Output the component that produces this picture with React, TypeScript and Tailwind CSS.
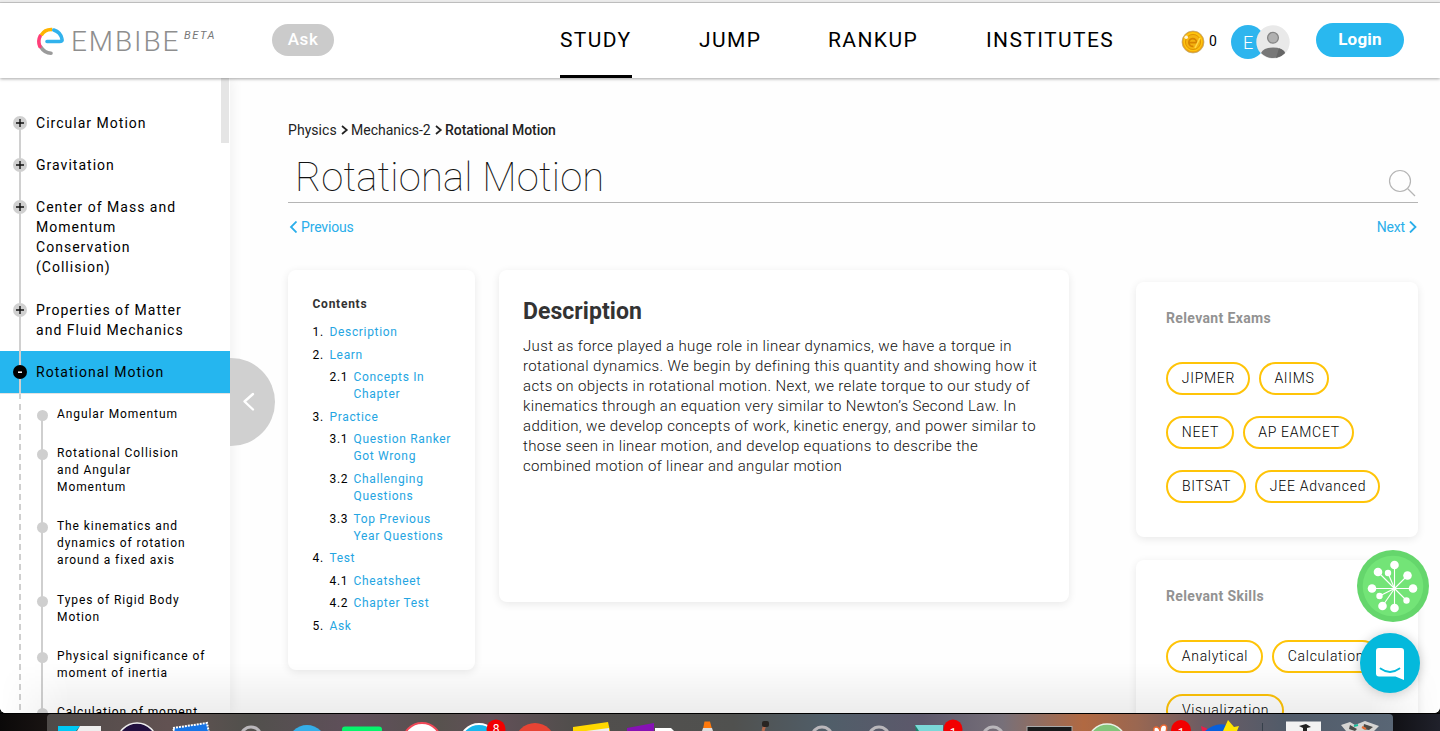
import React from "react";

type Topic = { title: string; height: string };

const topics: Topic[] = [
  { title: "Circular Motion", height: "h-[42px]" },
  { title: "Gravitation", height: "h-[42px]" },
  { title: "Center of Mass and Momentum Conservation (Collision)", height: "h-[103px]" },
  { title: "Properties of Matter and Fluid Mechanics", height: "h-[62px]" },
];

const subTopics = [
  { title: "Angular Momentum", height: "h-[39px]", width: "w-[150px]" },
  { title: "Rotational Collision and Angular Momentum", height: "h-[73px]", width: "w-[135px]" },
  { title: "The kinematics and dynamics of rotation around a fixed axis", height: "h-[74px]", width: "w-[140px]" },
  { title: "Types of Rigid Body Motion", height: "h-[56px]", width: "w-[140px]" },
  { title: "Physical significance of moment of inertia", height: "h-[56px]", width: "w-[160px]" },
  { title: "Calculation of moment of inertia", height: "h-[56px]", width: "w-[150px]" },
];

const contents = [
  { n: "1.", t: "Description" },
  { n: "2.", t: "Learn" },
  { n: "2.1", t: "Concepts In Chapter", sub: true },
  { n: "3.", t: "Practice" },
  { n: "3.1", t: "Question Ranker Got Wrong", sub: true },
  { n: "3.2", t: "Challenging Questions", sub: true },
  { n: "3.3", t: "Top Previous Year Questions", sub: true },
  { n: "4.", t: "Test" },
  { n: "4.1", t: "Cheatsheet", sub: true },
  { n: "4.2", t: "Chapter Test", sub: true },
  { n: "5.", t: "Ask" },
];

function Logo() {
  return (
    <svg width="30" height="31" viewBox="0 0 30 31" fill="none" strokeWidth="3.6" strokeLinecap="round">
      <path d="M5.8 22Q9.5 28 16 28.2" stroke="#9b9b9b" />
      <path d="M4.9 21.5A12.2 12.2 0 0 1 5.2 11" stroke="#ff3f79" />
      <path d="M6.2 10.2A12 12 0 0 1 17.2 4.6" stroke="#ffb400" strokeLinecap="butt" />
      <path d="M18.8 5A12 12 0 0 1 27 14Q27.6 16.5 24.5 16.5H12" stroke="#31b2ec" strokeLinejoin="round" />
    </svg>
  );
}

function Coin() {
  return (
    <svg width="24" height="24" viewBox="0 0 24 24">
      <circle cx="12" cy="12" r="11" fill="#eea20c" stroke="#b9a778" strokeWidth="0.7" />
      <circle cx="12" cy="11.6" r="9.6" fill="#fdc50f" />
      <circle cx="12" cy="12" r="7.6" fill="#f4b310" stroke="#e29500" strokeWidth="1" />
      <path d="M8.3 12.7H15.6A3.9 3.9 0 1 0 12.4 16.3" fill="none" stroke="#d78400" strokeWidth="1.7" />
      <path d="M14 18L19 8" stroke="#ffd949" strokeWidth="1.5" />
      <circle cx="5.2" cy="7.2" r="1.8" fill="#fff6d7" />
    </svg>
  );
}

function Avatar() {
  return (
    <svg className="-ml-[9px] relative" width="34" height="34" viewBox="0 0 34 34">
      <circle cx="17" cy="17" r="16.7" fill="#e9e9e9" />
      <path d="M5 28Q7.5 22.5 17 22.5T29 28A16.7 16.7 0 0 1 5 28Z" fill="#777" />
      <path d="M23 23.3Q27.5 24.4 29 28A16.7 16.7 0 0 1 20 33Z" fill="#666" />
      <circle cx="17" cy="12.8" r="5.4" fill="#b0b0b0" stroke="#858585" strokeWidth="1.3" />
    </svg>
  );
}

function Header() {
  return (
    <header className="relative z-20 flex h-[75px] w-full shrink-0 items-start bg-white shadow-[0_1px_3px_rgba(0,0,0,0.35)]">
      <div className="ml-[35px] mt-[22px] flex h-[30px] items-start">
        <Logo />
        <span className="ml-[6px] mt-px w-[109px] whitespace-nowrap text-[28px] leading-[32px] font-light tracking-[1.9px] text-[#8e8e8e]">EMBIBE</span>
        <span className="ml-[4px] mt-[4px] text-[11px] leading-[13px] italic tracking-[1.6px] text-[#777]">BETA</span>
      </div>
      <div className="absolute left-[272px] top-[21px] flex h-8 w-[62px] items-center justify-center rounded-full bg-[#cbcbcb] pb-px text-[17px] tracking-[0.6px] font-medium text-white">Ask</div>
      <nav className="absolute left-[560px] top-0 flex h-[75px] text-[21px] leading-[74px] tracking-[1.4px] text-black">
        <span className="w-[72px] border-b-3 border-black whitespace-nowrap">STUDY</span>
        <span className="ml-[67px] w-[62px] whitespace-nowrap">JUMP</span>
        <span className="ml-[67px] w-[91px] whitespace-nowrap">RANKUP</span>
        <span className="ml-[67px] whitespace-nowrap">INSTITUTES</span>
      </nav>
      <div className="ml-auto mr-9 flex h-[75px] items-start">
        <div className="mt-[27px]"><Coin /></div>
        <span className="ml-[4px] mt-[28px] w-[22px] text-[14px] leading-[21px] text-black">0</span>
        <div className="mt-[22px] flex">
          <span className="flex h-[34px] w-[34px] items-center justify-center rounded-full bg-[#2eb5ee] text-[18px] font-light text-white">E</span>
          <Avatar />
        </div>
        <button className="ml-[26px] mt-[20px] h-[34px] w-[88px] rounded-full bg-[#29b8ef] text-[17px] font-bold tracking-[0.2px] text-white">Login</button>
      </div>
    </header>
  );
}

function PlusDot() {
  return (
    <svg className="relative ml-[13px] mt-[14px] shrink-0" width="14" height="14">
      <circle cx="7" cy="7" r="7" fill="#d0d0d0" />
      <path d="M7 3V11M3 7H11" stroke="#111" strokeWidth="1.4" />
    </svg>
  );
}

function Sidebar() {
  return (
    <aside className="relative z-10 h-[635px] w-[230px] shrink-0 bg-white pt-6 shadow-[2px_0_12px_rgba(0,0,0,0.06)]">
      <div className="absolute right-[1px] top-0 h-[65px] w-2 bg-[#e5e5e5]" />
      {topics.map((t, i) => (
        <div key={t.title} className={`relative flex ${t.height}`}>
          <div className={`absolute left-[19px] bottom-0 w-[2px] bg-[#d0d0d0] ${i === 0 ? "top-[21px]" : "top-0"}`} />
          <PlusDot />
          <span className="ml-[9px] mt-[11px] w-[155px] text-[14px] leading-5 tracking-[1.02px] text-black">{t.title}</span>
        </div>
      ))}
      <div className="relative flex h-[42px] bg-[#25b6ef]">
        <div className="absolute left-[19px] top-0 h-[48px] w-[2px] bg-[#d0d0d0]" />
        <svg className="relative ml-[13px] mt-[14px] shrink-0" width="14" height="14">
          <circle cx="7" cy="7" r="7" fill="#000" />
          <path d="M5 7.2H9" stroke="#fff" strokeWidth="1.5" />
        </svg>
        <span className="ml-[9px] mt-[11px] text-[14px] leading-5 tracking-[1.02px] text-black">Rotational Motion</span>
      </div>
      <div className="relative h-[320px] overflow-hidden border-t border-[#e2e2e2]">
        <div className="absolute left-[19px] top-[10px] h-[315px] w-[2px] bg-[repeating-linear-gradient(to_bottom,#cfcfcf_0,#cfcfcf_6px,transparent_6px,transparent_10px)]" />
        {subTopics.map((s, i) => (
          <div key={s.title} className={`relative flex ${s.height}`}>
            <div className={`absolute left-[41px] bottom-0 w-[2px] bg-[#cfcfcf] ${i === 0 ? "top-[21px]" : "top-0"}`} />
            <span className="relative ml-[37px] mt-4 size-[11px] shrink-0 rounded-full bg-[#cfcfcf]" />
            <span className={`ml-[9px] mt-[12px] text-[12px] leading-[17px] tracking-[0.92px] text-black ${s.width}`}>{s.title}</span>
          </div>
        ))}
      </div>
      <div className="absolute left-[230px] top-[280px] flex h-[88px] w-[45px] items-center rounded-r-full bg-[#d0d0d0]">
        <svg className="ml-[12px]" width="14" height="20" fill="none" stroke="#fff" strokeWidth="2.4" strokeLinecap="round" strokeLinejoin="round">
          <path d="M11 2L2.5 9.5L11 17.5" />
        </svg>
      </div>
    </aside>
  );
}

function Chevron({ left, className }: { left?: boolean; className?: string }) {
  return (
    <svg className={className} width="8" height="12" fill="none" stroke="currentColor" strokeWidth="1.8">
      <path d={left ? "M7.5 0.5L2 6L7.5 11.5" : "M1 0.5L6.5 6L1 11.5"} />
    </svg>
  );
}

function CrumbChevron() {
  return (
    <svg width="8" height="10" fill="none" stroke="#222" strokeWidth="1.7">
      <path d="M1 1L5.8 5L1 9" />
    </svg>
  );
}

function Pill({ children, width }: { children: React.ReactNode; width: string }) {
  return (
    <span className={`flex shrink-0 h-[33px] items-center justify-center whitespace-nowrap rounded-full border-2 border-[#ffc408] pl-px text-[14px] font-light tracking-[0.72px] text-black ${width}`}>
      {children}
    </span>
  );
}

const card = "rounded-lg bg-white shadow-[0_2px_8px_rgba(0,0,0,0.09)]";

function Content() {
  return (
    <main className="flex h-[635px] flex-1 flex-col pl-[58px] pr-[22px] pt-[42px]">
      <div className="flex h-5 items-center text-[14px] text-[#222]">
        <span className="w-[53px] tracking-[0.05px]">Physics</span>
        <CrumbChevron />
        <span className="ml-[2px] w-[84px]">Mechanics-2</span>
        <CrumbChevron />
        <span className="ml-[2px] font-medium tracking-[-0.05px]">Rotational Motion</span>
      </div>
      <div className="flex h-[64px] items-start justify-between border-b border-[#b5b5b5] box-content">
        <h1 className="ml-[7px] mt-[14px] text-[40px] leading-[48px] font-thin tracking-[0.15px] text-[#111]">Rotational Motion</h1>
        <svg className="mr-[2px] mt-[29px]" width="28" height="28" fill="none" stroke="#b5b5b5" strokeWidth="1.2">
          <circle cx="12" cy="12" r="10.5" />
          <path d="M19.5 19.5L27 27" />
        </svg>
      </div>
      <div className="mt-[14px] flex h-5 justify-between text-[14px] tracking-[-0.15px] text-[#2aaeea]">
        <span className="flex items-center gap-1 pl-[1px]"><Chevron left />Previous</span>
        <span className="flex items-center gap-1 pr-[1px]">Next<Chevron /></span>
      </div>
      <div className="mt-[33px] flex items-start">
        <section className={`h-[400px] w-[187px] pl-[24.5px] pt-[26px] ${card}`}>
          <h3 className="text-[12px] leading-[17px] font-bold tracking-[0.75px] text-[#333]">Contents</h3>
          <div className="mt-[11px] flex flex-col gap-[5.6px] text-[12px] leading-[17px] tracking-[0.66px]">
            {contents.map((c) => (
              <div key={c.n} className={c.sub ? "flex pl-[17px]" : "flex"}>
                <span className={`shrink-0 text-black ${c.sub ? "w-[24px]" : "w-[17px]"}`}>{c.n}</span>
                <span className="w-[105px] text-[#25a5e2]">{c.t}</span>
              </div>
            ))}
          </div>
        </section>
        <section className={`ml-6 h-[332px] w-[570px] pl-6 pt-[27px] ${card}`}>
          <h2 className="text-[23px] leading-[30px] font-bold tracking-[0.05px] text-[#333]">Description</h2>
          <p className="mt-[9px] w-[540px] text-[15px] leading-5 font-light tracking-[0.35px] text-[#111]">
            Just as force played a huge role in linear dynamics, we have a torque in<br />
            rotational dynamics. We begin by defining this quantity and showing how it<br />
            acts on objects in rotational motion. Next, we relate torque to our study of<br />
            kinematics through an equation very similar to Newton’s Second Law. In<br />
            addition, we develop concepts of work, kinetic energy, and power similar to<br />
            those seen in linear motion, and develop equations to describe the<br />
            combined motion of linear and angular motion
          </p>
        </section>
        <div className="ml-[67px] mt-[12px] flex w-[282px] flex-col gap-[23px]">
          <section className={`h-[255px] pl-[30px] pt-[26px] ${card}`}>
            <h3 className="text-[14px] leading-5 font-bold tracking-[0.36px] text-[#929292]">Relevant Exams</h3>
            <div className="mt-[34px] flex flex-col gap-[21px]">
              <div className="flex gap-[9px]"><Pill width="w-[84px]">JIPMER</Pill><Pill width="w-[70px]">AIIMS</Pill></div>
              <div className="flex gap-[9px]"><Pill width="w-[68px]">NEET</Pill><Pill width="w-[111px]">AP EAMCET</Pill></div>
              <div className="flex gap-[9px]"><Pill width="w-[80px]">BITSAT</Pill><Pill width="w-[125px]">JEE Advanced</Pill></div>
            </div>
          </section>
          <section className={`h-[255px] pl-[30px] pt-[26px] ${card}`}>
            <h3 className="text-[14px] leading-5 font-bold tracking-[0.36px] text-[#929292]">Relevant Skills</h3>
            <div className="mt-[34px] flex flex-col gap-[21px]">
              <div className="flex gap-[9px]"><Pill width="w-[97px]">Analytical</Pill><Pill width="w-[107px]">Calculation</Pill></div>
              <Pill width="w-[118px]">Visualization</Pill>
            </div>
          </section>
        </div>
      </div>
    </main>
  );
}

const seeds: [number, number, number][] = [
  [37.5, 15, 4.3], [50.5, 25.5, 4.3], [56, 38.5, 4.3], [49.5, 50.5, 3.2], [37.5, 58, 4.3],
  [25.5, 56, 4.3], [22.5, 46, 3.2], [15, 38.5, 4.3], [21, 22, 4.3], [31, 23, 3.2],
];

function FloatingButtons() {
  return (
    <>
      <svg className="absolute left-[1357px] top-[550px] z-30" width="72" height="72">
        <circle cx="36" cy="36" r="36" fill="#65d66c" />
        <circle cx="36" cy="36" r="30.3" fill="#73e477" />
        {seeds.map(([x, y, r]) => (
          <g key={`${x}-${y}`} fill="#fff" stroke="#fff">
            <path d={`M37.5 38.5L${x} ${y}`} strokeWidth="1.1" />
            <circle cx={x} cy={y} r={r} stroke="none" />
          </g>
        ))}
      </svg>
      <div className="absolute left-[1360px] top-[633px] z-30 flex size-[60px] items-center justify-center rounded-full bg-[#04b9dc] shadow-[0_1px_12px_rgba(0,0,0,0.2)]">
        <svg width="28" height="32" className="mt-px">
          <path d="M3 0H25Q28 0 28 3V32L19.5 28.5H3Q0 28.5 0 25.5V3Q0 0 3 0Z" fill="#fff" />
          <path d="M4.5 20.5Q14 27.5 23.5 20.5" fill="none" stroke="#04b9dc" strokeWidth="1.8" strokeLinecap="round" />
        </svg>
      </div>
    </>
  );
}

function Dock() {
  return (
    <footer className="flex h-[18px] shrink-0 border-t border-black bg-[linear-gradient(to_right,#0b0909,#181312_45px,#101014_1390px,#20212b)]">
      <div className="ml-[47px] h-[17px] w-[1346px] rounded-t-[4px] bg-[linear-gradient(to_right,#4e4a48,#625252_9%,#51504c_15%,#604f5b_23%,#57524e_29%,#625058_33%,#514e4c_39%,#50514f_51%,#505e69_58%,#5d586b_65%,#777079_71%,#b16942_77%,#9a6751_81%,#6b5c64_86%,#515b69_92%,#596675)]">
        <svg className="block" width="1346" height="17" viewBox="47 714 1346 17">
          <path d="M58 726H80L76 731H58Z" fill="#00c9f5" />
          <path d="M80 726H101V731H77Z" fill="#eee" />
          <circle cx="137" cy="743" r="20" fill="#21103f" stroke="#eee" strokeWidth="1.5" />
          <path d="M173 728L207 723L209 733H175Z" fill="#1674e5" stroke="#fff" strokeWidth="2" strokeDasharray="2 1" />
          <g fill="none" stroke="#bab7bb" strokeWidth="3">
            <circle cx="251" cy="737" r="10" />
            <circle cx="822" cy="737" r="10" />
            <circle cx="879" cy="737" r="10" />
            <circle cx="993" cy="737" r="10" />
          </g>
          <circle cx="307" cy="744" r="19" fill="#35aee8" />
          <rect x="342" y="726.5" width="40" height="12" rx="3" fill="#06f46c" />
          <circle cx="422" cy="742" r="19" fill="#fff" stroke="#f04958" strokeWidth="2" />
          <circle cx="479" cy="743" r="19" fill="#18b7ed" stroke="#fff" strokeWidth="2" />
          <circle cx="496" cy="729" r="9.5" fill="#f20000" />
          <text x="496" y="733" textAnchor="middle" fontSize="12" fill="#fff">8</text>
          <circle cx="535" cy="743" r="20" fill="#e74434" />
          <path d="M573 727L608 722L610 731H573Z" fill="#ffd800" />
          <path d="M586 731L609 728V731Z" fill="#eee" />
          <path d="M627 728L654 723V731H627Z" fill="#8612b4" />
          <path d="M655 728H671L674 731H655Z" fill="#fff" />
          <path d="M703 729L704.5 721.5H710L712 729Z" fill="#ff790c" />
          <path d="M703 728H712L713 731H702Z" fill="#ddd" />
          <path d="M763 731L765 724" stroke="#b66a4c" strokeWidth="3" />
          <rect x="762" y="721" width="7" height="6" rx="2" fill="#292522" />
          <path d="M915 725H943V731H917Z" fill="#7bd8d8" />
          <path d="M915 725L919 731H916Z" fill="#198269" />
          <circle cx="953" cy="729" r="9.5" fill="#f20000" />
          <text x="953" y="737" textAnchor="middle" fontSize="12" fill="#fff">1</text>
          <rect x="1027" y="726.5" width="45" height="10" fill="#191a1b" stroke="#aaa" />
          <circle cx="1107" cy="743" r="19" fill="#82c57a" stroke="#e8f2e6" strokeWidth="1.5" />
          <path d="M1154 732Q1153 727 1156 727T1160 731Q1160 725 1164 725T1166 732" fill="#fff" stroke="#eb6732" strokeWidth="1.5" />
          <circle cx="1181" cy="730" r="10" fill="#f20000" />
          <text x="1181" y="737" textAnchor="middle" fontSize="12" fill="#fff">1</text>
          <path d="M1201 726L1206 728L1210 731H1202Z" fill="#e91f4a" />
          <path d="M1205 731Q1218 720 1232 727L1234 731Z" fill="#075fdc" />
          <path d="M1223 731L1228 720L1234 727L1239 726L1237 731Z" fill="#ffe600" />
          <path d="M1262.5 723V731" stroke="#36404b" />
          <rect x="1286" y="721.5" width="35" height="12" fill="#f2f2f2" />
          <path d="M1299 726L1306 724L1311 727L1307 728V731H1303V728Z" fill="#222" />
          <path d="M1341 725L1350 722L1355 725L1365 721L1379 726L1374 731H1346Z" fill="#d6d5d3" />
          <path d="M1350 725L1357 729L1355 731L1349 729ZM1364 724L1373 727L1369 730L1363 729Z" fill="#4b4b48" />
          <path d="M1354 726L1358 725" stroke="#18bd9b" strokeWidth="2" />
          <path d="M1362 727L1366 729" stroke="#e46c33" strokeWidth="2" />
        </svg>
      </div>
    </footer>
  );
}

export default function App() {
  return (
    <div className="relative flex h-[731px] w-[1440px] flex-col overflow-hidden bg-[#111] font-['Roboto','Liberation_Sans',sans-serif]">
      <div className="relative flex h-[713px] shrink-0 flex-col overflow-hidden rounded-b-[6px] bg-white">
        <div className="h-[3px] shrink-0 border-b border-[#c9c9c9] bg-[#ececec]" />
        <Header />
        <div className="flex h-[635px] bg-[#fefefe]">
          <Sidebar />
          <Content />
        </div>
        <div className="pointer-events-none absolute inset-x-0 bottom-0 z-20 h-[50px] bg-[linear-gradient(to_bottom,transparent,rgba(0,0,0,0.07))] [mask-image:linear-gradient(to_right,transparent,black_70px,black_1370px,transparent)]" />
        <FloatingButtons />
      </div>
      <Dock />
    </div>
  );
}
